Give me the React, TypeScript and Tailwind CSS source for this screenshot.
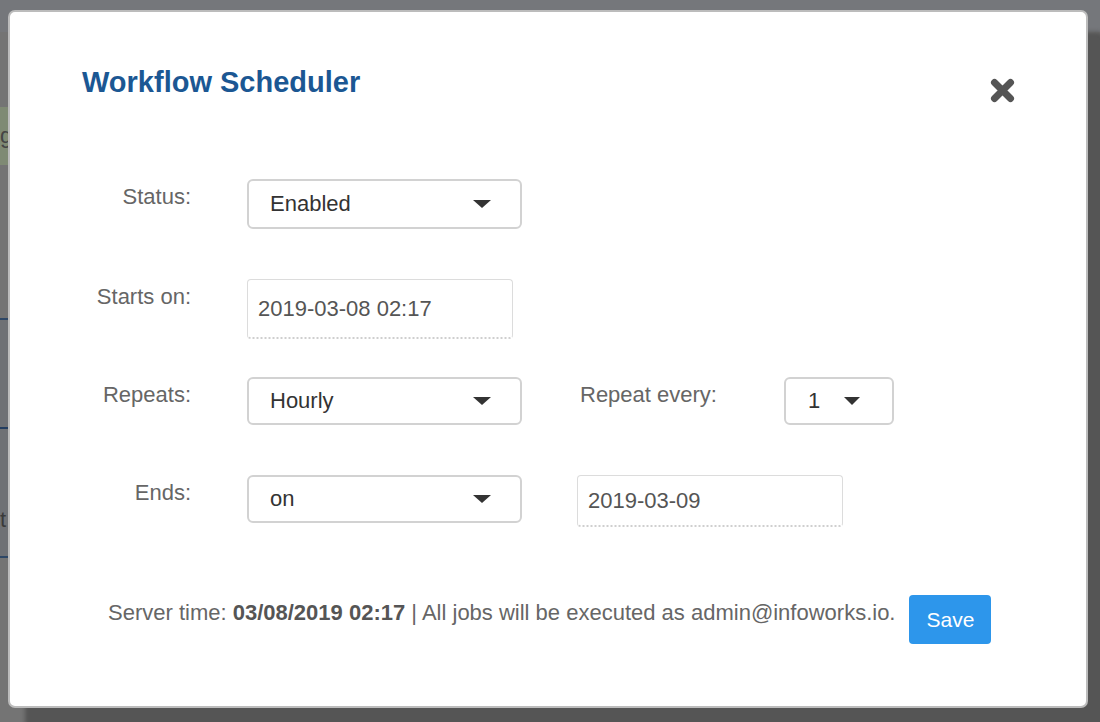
import { ReactNode } from "react"

const font = { fontFamily: '"Liberation Sans", Arial, Helvetica, sans-serif' }

function Caret({ className }: { className?: string }) {
    return (
        <svg width="18" height="8" viewBox="0 0 18 8" className={className}>
            <polygon points="0,0 18,0 9,8" fill="#333" />
        </svg>
    )
}

function Select({ value, width, height = 48 }: { value: string; width: string; height?: number }) {
    return (
        <div
            className={`flex items-center justify-between rounded-[6px] border-2 border-[#d2d2d2] bg-white pl-[21px] pr-[29px] text-[22px] text-[#333] ${width}`}
            style={{ height }}
        >
            <span className="leading-[26px]">{value}</span>
            <Caret />
        </div>
    )
}

function DateInput({ value, height }: { value: string; height: string }) {
    return (
        <div
            className={`flex w-[266px] items-center rounded-[4px] border border-b-2 border-[#dcdcdc] border-b-[#cfcfcf] border-dotted bg-white pl-[10px] text-[22px] text-[#555] ${height}`}
            style={{ borderTopStyle: "solid", borderLeftStyle: "solid", borderRightStyle: "solid" }}
        >
            <span className="leading-[26px]">{value}</span>
        </div>
    )
}

function Row({ label, children, className }: { label: string; children: ReactNode; className?: string }) {
    return (
        <div className={`flex items-start ${className ?? ""}`}>
            <div className="w-[109px] shrink-0 pt-[5px] text-right text-[22px] leading-[26px] text-[#666]">{label}</div>
            <div className="ml-[56px] flex items-start">{children}</div>
        </div>
    )
}

export default function App() {
    return (
        <div className="relative h-[722px] w-[1100px] overflow-hidden bg-[#747474]" style={font}>
            {/* page behind the overlay */}
            <div className="h-[32px] bg-[#75777b]" />
            <div className="mt-[75px] h-[58px] w-[8px] bg-[#7f8a74] text-[22px] leading-[58px] text-[#444]">ge</div>
            <div className="mt-[153px] h-[240px] w-[8px] border-y-2 border-[#2e4766] bg-[#6f7175]">
                <div className="mt-[107px] border-t-2 border-[#233d60]" />
                <div className="mt-[78px] text-[22px] leading-[26px] text-[#3a3a3a]">t</div>
            </div>

            {/* modal */}
            <div className="absolute left-[8px] top-[10px] h-[698px] w-[1080px] rounded-[7px] border-2 border-[#bcbcbc] bg-white pl-[72px] pr-[71px] pt-[53px] shadow-[17px_22px_4px_#555]">
                <div className="flex items-start justify-between">
                    <h1 className="text-[29px] font-bold leading-[34px] text-[#1b5793]">Workflow Scheduler</h1>
                    <svg width="25" height="25" viewBox="0 0 25 25" className="mt-[13px]">
                        <path d="M4.5 4.5 L20.5 20.5 M20.5 4.5 L4.5 20.5" stroke="#555" strokeWidth="7" strokeLinecap="round" />
                    </svg>
                </div>

                <div className="mt-[76px] flex flex-col">
                    <Row label="Status:">
                        <Select value="Enabled" width="w-[275px]" height={50} />
                    </Row>
                    <Row label="Starts on:" className="mt-[50px]">
                        <DateInput value="2019-03-08 02:17" height="h-[60px]" />
                    </Row>
                    <Row label="Repeats:" className="mt-[38px]">
                        <Select value="Hourly" width="w-[275px]" />
                        <div className="ml-[58px] w-[204px] pt-[5px] text-[22px] leading-[26px] text-[#666]">Repeat every:</div>
                        <div className="flex h-[48px] w-[110px] items-center justify-between rounded-[6px] border-2 border-[#d2d2d2] pl-[22px] pr-[32px] text-[22px] text-[#333]">
                            <span className="leading-[26px]">1</span>
                            <svg width="16" height="8" viewBox="0 0 16 8">
                                <polygon points="0,0 16,0 8,8" fill="#333" />
                            </svg>
                        </div>
                    </Row>
                    <Row label="Ends:" className="mt-[50px]">
                        <Select value="on" width="w-[275px]" />
                        <div className="ml-[55px]">
                            <DateInput value="2019-03-09" height="h-[52px]" />
                        </div>
                    </Row>
                </div>

                <div className="ml-[26px] mt-[68px] flex items-start">
                    <p className="mt-[5px] text-[22px] leading-[26px] text-[#666]">
                        Server time: <b className="text-[#555]">03/08/2019 02:17</b> | All jobs will be executed as admin@infoworks.io.
                    </p>
                    <button className="ml-[14px] h-[49px] w-[82px] rounded-[4px] bg-[#2d96eb] text-[21px] text-white">Save</button>
                </div>
            </div>
        </div>
    )
}
